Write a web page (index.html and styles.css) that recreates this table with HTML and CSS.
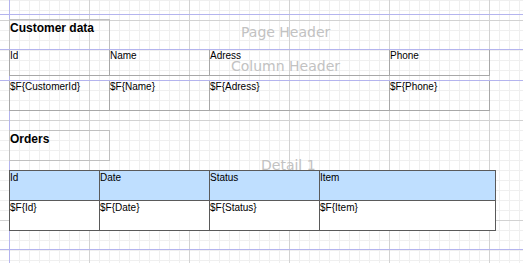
FILE: index.html
```html
<!DOCTYPE html>
<html>
<head>
<meta charset="utf-8">
<link rel="stylesheet" href="styles.css">
</head>
<body>
<div class="canvas">
  <div class="band band-top"></div>

  <div class="band band-page">
    <div class="band-label label-page">Page Header</div>
    <div class="title-box">Customer data</div>
  </div>

  <div class="band band-colhead">
    <div class="band-label label-col">Column Header</div>
    <div class="field-row head-row">
      <div class="fcell">Id</div>
      <div class="fcell">Name</div>
      <div class="fcell">Adress</div>
      <div class="fcell">Phone</div>
    </div>
  </div>

  <div class="band band-detail">
    <div class="band-label label-detail">Detail 1</div>
    <div class="field-row data-row">
      <div class="fcell">$F{CustomerId}</div>
      <div class="fcell">$F{Name}</div>
      <div class="fcell">$F{Adress}</div>
      <div class="fcell">$F{Phone}</div>
    </div>
    <div class="title-box orders-box">Orders</div>
    <div class="orders-table">
      <div class="tcell thead">Id</div>
      <div class="tcell thead">Date</div>
      <div class="tcell thead">Status</div>
      <div class="tcell thead">Item</div>
      <div class="tcell">$F{Id}</div>
      <div class="tcell">$F{Date}</div>
      <div class="tcell">$F{Status}</div>
      <div class="tcell">$F{Item}</div>
    </div>
  </div>
</div>
</body>
</html>
```

FILE: styles.css
```css
* { box-sizing: border-box; }

html, body {
  margin: 0;
  padding: 0;
  background: #ffffff;
}

.canvas {
  width: 523px;
  height: 263px;
  overflow: hidden;
  font-family: "Liberation Sans", Arial, sans-serif;
  color: #000;
  background-color: #ffffff;
  background-image:
    linear-gradient(to right, #b4b4ee 1px, transparent 1px),
    linear-gradient(to right, #d2d2d2 1px, transparent 1px),
    linear-gradient(to bottom, #d2d2d2 1px, transparent 1px),
    linear-gradient(to right, #efefef 1px, transparent 1px),
    linear-gradient(to bottom, #efefef 1px, transparent 1px);
  background-size:
    100% 100%,
    100px 100%,
    100% 100px,
    10px 100%,
    100% 10px;
  background-position:
    9px 0,
    89px 0,
    0 20px,
    9px 0,
    0 0;
  background-repeat: no-repeat, repeat, repeat, repeat, repeat;
}

.band {
  position: relative;
  border-bottom: 1px solid #b4b4ee;
}

.band-top { height: 15px; }
.band-page { height: 35px; padding-top: 4px; }
.band-colhead { height: 31px; }
.band-detail { height: 169px; }

.band-label {
  position: absolute;
  font-family: "DejaVu Sans", Verdana, sans-serif;
  font-size: 14px;
  line-height: 16px;
  color: #c2c2c2;
  white-space: nowrap;
  z-index: 0;
}

.label-page { left: 241px; top: 9px; }
.label-col { left: 231px; top: 8px; }
.label-detail { left: 261px; top: 76px; }

.title-box {
  position: relative;
  z-index: 1;
  margin-left: 9px;
  width: 101px;
  font-weight: bold;
  font-size: 12px;
  line-height: 14px;
  padding: 1px 0 0 0;
  border: 1px solid #c0c0c0;
}

.band-page .title-box {
  height: 30px;
  border-bottom: none;
}

.field-row {
  position: relative;
  z-index: 1;
  display: grid;
  grid-template-columns: 100px 100px 180px 100px;
  margin-left: 9px;
  width: 481px;
  border-right: 1px solid #a8a8a8;
  border-bottom: 1px solid #a8a8a8;
}

.fcell {
  border-left: 1px solid #a8a8a8;
  font-size: 10px;
  line-height: 12px;
  white-space: nowrap;
}

.head-row .fcell { height: 25px; }
.data-row .fcell { height: 29px; }

.orders-box {
  margin-top: 19px;
  height: 31px;
}

.orders-table {
  position: relative;
  z-index: 1;
  display: grid;
  grid-template-columns: 90px 110px 110px 176px;
  grid-auto-rows: 30px;
  margin-top: 9px;
  margin-left: 9px;
  width: 487px;
  border-right: 1px solid #5a5a5a;
  border-bottom: 1px solid #5a5a5a;
  background: #ffffff;
}

.tcell {
  border-left: 1px solid #5a5a5a;
  border-top: 1px solid #5a5a5a;
  font-size: 10px;
  line-height: 12px;
  padding-top: 1px;
  white-space: nowrap;
}

.thead { background: #bfdfff; }
```
